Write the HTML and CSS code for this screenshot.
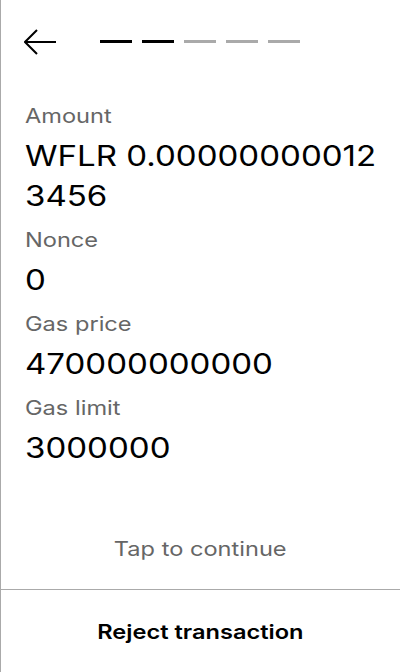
FILE: index.html
```html
<!DOCTYPE html>
<html>
<head>
<meta charset="utf-8">
<link rel="stylesheet" href="styles.css">
</head>
<body>
<div class="screen">
  <div class="header">
    <svg class="back" width="33" height="26" viewBox="0 0 33 26" fill="none" stroke="#000" stroke-width="2">
      <path d="M13 1 L1 13 L13 25 M1 13 H32"/>
    </svg>
    <div class="steps">
      <span class="step done"></span>
      <span class="step done"></span>
      <span class="step"></span>
      <span class="step"></span>
      <span class="step"></span>
    </div>
  </div>
  <div class="content">
    <div class="item">
      <div class="label wide">Amount</div>
      <div class="value wide">WFLR 0.000000000123456</div>
    </div>
    <div class="item">
      <div class="label wide">Nonce</div>
      <div class="value wide">0</div>
    </div>
    <div class="item">
      <div class="label wide">Gas price</div>
      <div class="value wide">470000000000</div>
    </div>
    <div class="item">
      <div class="label wide">Gas limit</div>
      <div class="value wide">3000000</div>
    </div>
  </div>
  <div class="tap"><span class="wide-c">Tap to continue</span></div>
  <div class="reject"><span class="wide-c">Reject transaction</span></div>
</div>
</body>
</html>
```

FILE: styles.css
```css
:root {
  --sx: 1.18;
}
html, body {
  margin: 0;
  padding: 0;
  background: #fff;
}
.screen {
  width: 400px;
  height: 672px;
  box-sizing: border-box;
  border-left: 1px solid #aaa;
  display: flex;
  flex-direction: column;
  font-family: Inter, "Noto Sans", sans-serif;
  color: #000;
}
.header {
  height: 84px;
  flex: none;
  display: flex;
  align-items: center;
  padding-left: 23px;
}
.back {
  display: block;
  flex: none;
}
.steps {
  display: flex;
  gap: 10px;
  margin-left: 43px;
  margin-top: -1px;
}
.step {
  width: 32px;
  height: 3px;
  background: #aaa;
}
.step.done {
  background: #000;
}
.content {
  padding: 18px 18px 0 24px;
}
.item {
  margin-bottom: 10px;
}
.wide {
  width: calc(100% / var(--sx));
  transform: scaleX(var(--sx));
  transform-origin: left center;
}
.wide-c {
  display: inline-block;
  transform: scaleX(var(--sx));
  transform-origin: center center;
}
.label {
  font-size: 20px;
  line-height: 28px;
  color: #666;
  margin-bottom: 6px;
}
.value {
  font-size: 28px;
  line-height: 40px;
  word-break: break-all;
}
.tap {
  margin-top: auto;
  font-size: 20px;
  line-height: 28px;
  color: #666;
  text-align: center;
  padding-bottom: 26px;
}
.reject {
  flex: none;
  height: 83px;
  border-top: 1px solid #aaa;
  display: flex;
  align-items: center;
  justify-content: center;
  font-size: 20px;
  font-weight: 600;
  line-height: 28px;
  padding-top: 1px;
  box-sizing: border-box;
}
```
